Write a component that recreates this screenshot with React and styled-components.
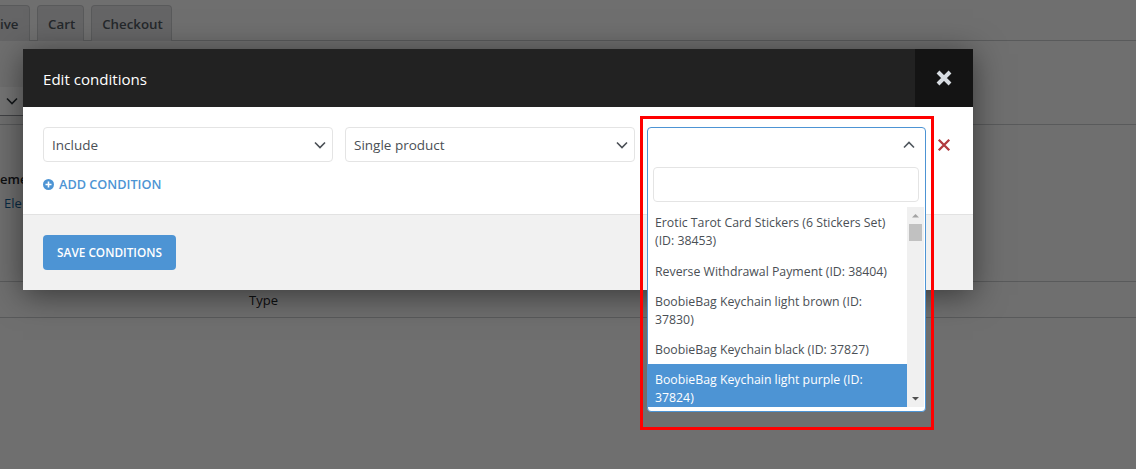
import React from "react";
import styled, { createGlobalStyle } from "styled-components";

const Global = createGlobalStyle`
  html, body { margin: 0; padding: 0; width: 100%; height: 100%; overflow: hidden; background: #f1f1f1; }
  body, button, input { font-family: "Open Sans", "Noto Sans", sans-serif; }
  * { box-sizing: border-box; }
`;

const Page = styled.div`
  position: relative;
  width: 1136px;
  height: 469px;
  overflow: hidden;
  background: #f1f1f1;
  color: #23282d;
`;
const TabBar = styled.div`
  display: flex;
  gap: 7px;
  height: 41px;
  padding: 5px 0 0;
  border-bottom: 1px solid #c3c4c7;
`;
const Tab = styled.div`
  height: 36px;
  padding: 0 8px 0 10px;
  display: flex;
  align-items: center;
  border: 1px solid #c3c4c7;
  border-bottom: 0;
  border-radius: 4px 4px 0 0;
  background: #dcdcde;
  color: #50575e;
  font-size: 13.3px;
  font-weight: 600;
`;
const FirstTab = styled(Tab)`
  width: 30px;
  padding: 0;
  border-left: 0;
  border-top-left-radius: 0;
`;
const GhostSelect = styled.div`
  width: 23px;
  height: 29px;
  margin-top: 46px;
  display: flex;
  align-items: center;
  justify-content: flex-end;
  padding-right: 3px;
  background: #fff;
  border-bottom: 1px solid #8c8f94;
  color: #2c3338;
`;
const Rule = styled.div`
  border-top: 1px solid #c3c4c7;
  margin-top: ${(p) => p.$top}px;
`;
const GhostText = styled.div`
  font-size: 13px;
  line-height: 20px;
  color: ${(p) => p.$color || "#1d2327"};
  margin-top: ${(p) => p.$top}px;
  padding-left: ${(p) => p.$left}px;
  font-weight: ${(p) => p.$weight || 400};
`;
const Overlay = styled.div`
  position: absolute;
  inset: 0;
  background: rgba(0, 0, 0, 0.54);
`;
const Modal = styled.div`
  position: absolute;
  left: 23px;
  top: 49px;
  width: 950px;
  height: 241px;
  display: flex;
  flex-direction: column;
  background: #fff;
  box-shadow: 0 5px 30px rgba(0, 0, 0, 0.5);
`;
const ModalHeader = styled.div`
  height: 58px;
  flex: none;
  display: flex;
  align-items: center;
  justify-content: space-between;
  padding-left: 20px;
  background: #222;
  color: #fff;
`;
const ModalTitle = styled.div`
  padding-top: 1px;
  font-size: 15.1px;
`;
const CloseBox = styled.div`
  width: 58px;
  height: 58px;
  display: flex;
  align-items: center;
  justify-content: center;
  background: #141414;
  color: #d8dde2;
`;
const ModalBody = styled.div`
  height: 108px;
  flex: none;
  padding: 20px 20px 0;
  border-bottom: 1px solid #e2e2e2;
`;
const Row = styled.div`
  display: flex;
  gap: 12px;
  align-items: center;
`;
const Select = styled.div`
  width: 290px;
  height: 35px;
  display: flex;
  align-items: center;
  justify-content: space-between;
  padding: 0 4px 0 8px;
  border: 1px solid #e4e4e4;
  border-radius: 4px;
  color: #4a4f55;
  font-size: 13.5px;
`;
const OpenSelectSlot = styled.div`
  width: 279px;
  height: 35px;
`;
const Remove = styled.div`
  margin-left: -1px;
  display: flex;
  color: #b13a3f;
`;
const AddLink = styled.div`
  margin-top: 13px;
  display: flex;
  align-items: center;
  gap: 5px;
  color: #4d94d4;
  font-size: 12.7px;
  font-weight: 600;
  line-height: 18px;
`;
const ModalFooter = styled.div`
  flex: 1;
  padding: 20px;
  background: #f1f1f1;
`;
const SaveButton = styled.button`
  width: 133px;
  height: 35px;
  padding: 0 0 2px;
  border: 0;
  border-radius: 4px;
  background: #4d94d4;
  color: #fff;
  font-size: 11.8px;
  font-weight: 600;
  white-space: nowrap;
`;
const Dropdown = styled.div`
  position: absolute;
  left: 647px;
  top: 127px;
  width: 279px;
  height: 285px;
  display: flex;
  flex-direction: column;
  padding-bottom: 4px;
  background: #fff;
  border: 1px solid #4d94d4;
  border-radius: 4px;
  overflow: hidden;
`;
const DropdownHead = styled.div`
  height: 33px;
  flex: none;
  display: flex;
  align-items: center;
  justify-content: flex-end;
  padding-right: 8px;
  color: #50575e;
`;
const SearchInput = styled.input`
  flex: none;
  display: block;
  width: 266px;
  height: 35px;
  margin: 6px 0 5px 5px;
  border: 1px solid #e4e4e4;
  border-radius: 4px;
  background: #fff;
  outline: none;
`;
const ListArea = styled.div`
  flex: 1;
  display: flex;
  min-height: 0;
  margin-right: 1px;
`;
const Options = styled.div`
  flex: 1;
  min-width: 0;
  padding-top: 1px;
  overflow: hidden;
`;
const Option = styled.div`
  padding: 6px 7px;
  font-size: 12.3px;
  line-height: 18px;
  color: ${(p) => (p.$active ? "#fff" : "#4a4f55")};
  background: ${(p) => (p.$active ? "#4d94d4" : "transparent")};

  & + & {
    padding: 7px 7px 5px;
  }
`;
const Scrollbar = styled.div`
  width: 17px;
  flex: none;
  display: flex;
  flex-direction: column;
  align-items: center;
  background: #f0f0f0;
  color: #a3a3a3;
`;
const ScrollArrow = styled.svg`
  width: 17px;
  height: 17px;
  flex: none;
`;
const ScrollThumb = styled.div`
  width: 13px;
  height: 17px;
  background: #c1c1c1;
`;
const ScrollFill = styled.div`
  flex: 1;
`;
const Highlight = styled.div`
  position: absolute;
  left: 640px;
  top: 116px;
  width: 294px;
  height: 314px;
  border: 3px solid #ff0000;
  pointer-events: none;
`;

const Chevron = ({ up }) => (
  <svg width="16" height="16" viewBox="0 0 16 16" fill="none" stroke="currentColor" strokeWidth="1.6">
    <path d={up ? "M3 10.5 8 5.5l5 5" : "M3 5.5 8 10.5l5-5"} />
  </svg>
);

const Cross = ({ size, width }) => (
  <svg width={size} height={size} viewBox="0 0 12 12" fill="none" stroke="currentColor" strokeWidth={width}>
    <path d="M1.5 1.5l9 9M10.5 1.5l-9 9" />
  </svg>
);

const PlusCircle = () => (
  <svg width="11" height="11" viewBox="0 0 11 11">
    <circle cx="5.5" cy="5.5" r="5.5" fill="currentColor" />
    <path d="M5.5 2.5v6M2.5 5.5h6" stroke="#fff" strokeWidth="1.6" />
  </svg>
);

const items = [
  { text: "Erotic Tarot Card Stickers (6 Stickers Set) (ID: 38453)" },
  { text: "Reverse Withdrawal Payment (ID: 38404)" },
  { text: "BoobieBag Keychain light brown (ID: 37830)" },
  { text: "BoobieBag Keychain black (ID: 37827)" },
  { text: "BoobieBag Keychain light purple (ID: 37824)", active: true },
];

export default function App() {
  return (
    <Page>
      <Global />
      <TabBar>
        <FirstTab>ive</FirstTab>
        <Tab>Cart</Tab>
        <Tab>Checkout</Tab>
      </TabBar>
      <GhostSelect>
        <Chevron />
      </GhostSelect>
      <Rule $top={8} />
      <GhostText $top={44} $left={0} $weight={600}>eme</GhostText>
      <GhostText $top={4} $left={4} $color="#135e96">Ele</GhostText>
      <Rule $top={68} />
      <GhostText $top={8} $left={249}>Type</GhostText>
      <Rule $top={7} />
      <Overlay />
      <Modal>
        <ModalHeader>
          <ModalTitle>Edit conditions</ModalTitle>
          <CloseBox>
            <Cross size={16} width={3} />
          </CloseBox>
        </ModalHeader>
        <ModalBody>
          <Row>
            <Select>
              Include
              <Chevron />
            </Select>
            <Select>
              Single product
              <Chevron />
            </Select>
            <OpenSelectSlot />
            <Remove>
              <Cross size={14} width={2} />
            </Remove>
          </Row>
          <AddLink>
            <PlusCircle />
            ADD CONDITION
          </AddLink>
        </ModalBody>
        <ModalFooter>
          <SaveButton>SAVE CONDITIONS</SaveButton>
        </ModalFooter>
      </Modal>
      <Dropdown>
        <DropdownHead>
          <Chevron up />
        </DropdownHead>
        <SearchInput />
        <ListArea>
          <Options>
            {items.map((it) => (
              <Option key={it.text} $active={it.active}>
                {it.text}
              </Option>
            ))}
          </Options>
          <Scrollbar>
            <ScrollArrow viewBox="0 0 17 17">
              <path d="M5 10.5 8.5 7l3.5 3.5z" fill="currentColor" />
            </ScrollArrow>
            <ScrollThumb />
            <ScrollFill />
            <ScrollArrow viewBox="0 0 17 17">
              <path d="M5 7h7l-3.5 3.5z" fill="#505050" />
            </ScrollArrow>
          </Scrollbar>
        </ListArea>
      </Dropdown>
      <Highlight />
    </Page>
  );
}
